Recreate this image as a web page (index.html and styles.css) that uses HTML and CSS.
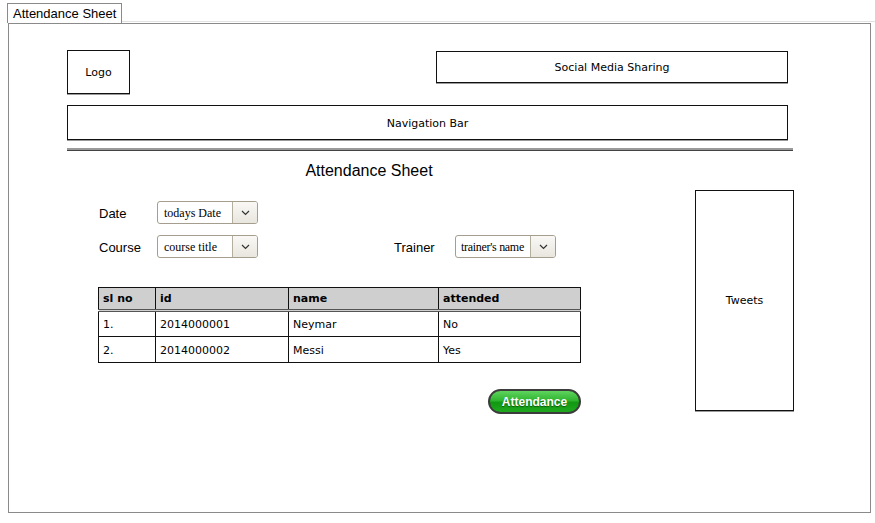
FILE: index.html
```html
<!DOCTYPE html>
<html>
<head>
<meta charset="utf-8">
<link rel="stylesheet" href="styles.css">
</head>
<body>
<div class="tab-strip"><div class="tab">Attendance Sheet</div><div class="tab-line"></div></div>
<div class="frame">
  <div class="page">
    <div class="header">
      <div class="box logo">Logo</div>
      <div class="box social">Social Media Sharing</div>
    </div>
    <div class="box nav">Navigation Bar</div>
    <div class="rule"></div>
    <div class="main">
      <div class="left">
        <h1 class="title">Attendance Sheet</h1>
        <div class="form">
          <div class="row">
            <span class="label">Date</span>
            <div class="select"><span class="value">todays Date</span><span class="arrow"><svg width="9" height="6" viewBox="0 0 9 6"><path d="M1 1l3.5 3.5L8 1" fill="none" stroke="#333" stroke-width="1.2"/></svg></span></div>
          </div>
          <div class="row">
            <span class="label">Course</span>
            <div class="select"><span class="value">course title</span><span class="arrow"><svg width="9" height="6" viewBox="0 0 9 6"><path d="M1 1l3.5 3.5L8 1" fill="none" stroke="#333" stroke-width="1.2"/></svg></span></div>
            <span class="label trainer">Trainer</span>
            <div class="select"><span class="value tight">trainer's name</span><span class="arrow"><svg width="9" height="6" viewBox="0 0 9 6"><path d="M1 1l3.5 3.5L8 1" fill="none" stroke="#333" stroke-width="1.2"/></svg></span></div>
          </div>
        </div>
        <table class="grid">
          <thead>
            <tr><th class="c1">sl no</th><th class="c2">id</th><th class="c3">name</th><th class="c4">attended</th></tr>
          </thead>
          <tbody>
            <tr><td>1.</td><td>2014000001</td><td>Neymar</td><td>No</td></tr>
            <tr><td>2.</td><td>2014000002</td><td>Messi</td><td>Yes</td></tr>
          </tbody>
        </table>
        <div class="actions"><button class="btn">Attendance</button></div>
      </div>
      <div class="box tweets">Tweets</div>
    </div>
  </div>
</div>
</body>
</html>
```
FILE: styles.css
```css
* { box-sizing: border-box; }
html, body { margin: 0; padding: 0; background: #fff; }
body { font-family: "Liberation Sans", Arial, sans-serif; color: #000; width: 875px; height: 523px; overflow: hidden; }

.tab-strip { display: flex; align-items: flex-end; padding: 3px 0 0 7px; height: 23px; }
.tab {
  height: 20px; padding: 0 5px; border: 1px solid #8a8a8a; border-bottom: 0;
  font-size: 13px; line-height: 19px; color: #000; background: #fff;
}
.tab-line { flex: 1; height: 1px; background: #e2e2e2; margin-bottom: 1px; }

.frame {
  margin-left: 8px; width: 863px; height: 490px;
  border: 1px solid #8a8a8a;
}
.page { padding: 26px 0 0 58px; }

.box {
  border: 1px solid #111; background: #fff;
  display: flex; align-items: center; justify-content: center;
  font-family: "DejaVu Sans", sans-serif; font-size: 11px;
  box-shadow: 0 1px 0 #9a9a9a;
}

.header { display: flex; align-items: flex-start; width: 721px; }
.logo { width: 63px; height: 44px; }
.social { margin-left: auto; margin-top: 1px; width: 352px; height: 32px; }
.nav { margin-top: 11px; width: 721px; height: 35px; padding-top: 2px; }
.rule { margin-top: 8px; width: 726px; height: 3px; background: #9a9a9a; border-bottom: 1px solid #444; }

.main { display: flex; align-items: flex-start; }
.left { width: 604px; }
.tweets { margin-left: 24px; margin-top: 39px; width: 99px; height: 221px; }

.title { margin: 11px 0 0; font-size: 16px; font-weight: normal; line-height: 18px; text-align: center; }

.form { margin-top: 21px; padding-left: 32px; display: flex; flex-direction: column; gap: 11px; }
.row { display: flex; align-items: center; height: 23px; }
.label { width: 58px; font-size: 13px; padding-top: 1px; }
.label.trainer { margin-left: 136px; width: 61px; }
.select {
  width: 101px; height: 23px; display: flex; border: 1px solid #a59e8e; border-radius: 3px; background: #fff; overflow: hidden;
}
.value { flex: 1; font-family: "Liberation Serif", serif; font-size: 12px; line-height: 22px; padding-left: 6px; white-space: nowrap; overflow: hidden; }
.value.tight { padding-left: 5px; letter-spacing: -0.3px; }
.arrow {
  width: 25px; border-left: 1px solid #b4ae9f; display: flex; align-items: center; justify-content: center;
  background: linear-gradient(#f9f8f5, #e9e6de);
}

.grid {
  margin: 29px 0 0 31px; width: 483px; border-collapse: collapse;
  font-family: "DejaVu Sans", sans-serif; font-size: 11px;
}
.grid th, .grid td { border: 1px solid #111; text-align: left; padding: 0 0 0 4px; }
.grid th { background: #cfcfcf; font-weight: bold; height: 23px; border-bottom: 3px double #555; }
.grid td { height: 26px; padding-top: 1px; }
.c1 { width: 57px; } .c2 { width: 133px; } .c3 { width: 150px; } .c4 { width: 142px; }

.actions { margin-top: 26px; padding-left: 421px; }
.btn {
  width: 93px; height: 25px; border: 2px solid #3c3c3c; border-radius: 13px;
  background: linear-gradient(#5fd45f 0%, #2fb52f 45%, #129812 55%, #1fa81f 100%);
  color: #fff; font-family: "Liberation Sans", Arial, sans-serif; font-size: 12px; font-weight: bold;
  text-shadow: 0 1px 1px #0a5a0a; padding: 0; line-height: 20px;
}
```
